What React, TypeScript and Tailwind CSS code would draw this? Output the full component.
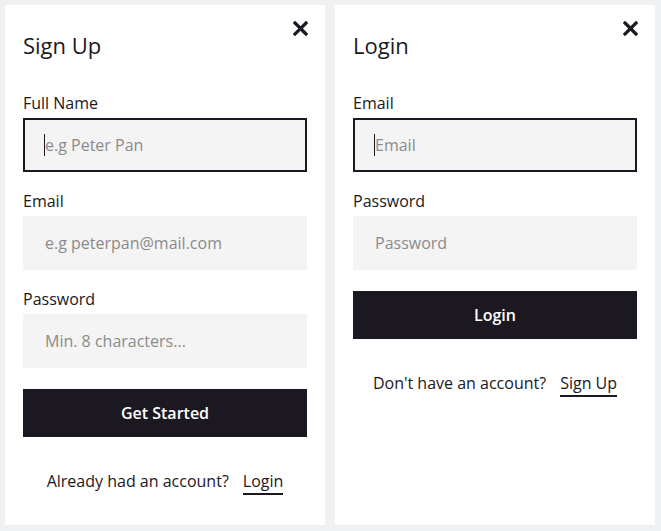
import React from "react";

const ink = "text-[#1b1821]";

function CloseIcon() {
  return (
    <svg width="15" height="15" viewBox="0 0 15 15" className="absolute top-[16px] right-[17px]">
      <path d="M2 2 L13 13 M13 2 L2 13" stroke="#1b1821" strokeWidth="3.2" strokeLinecap="square" />
    </svg>
  );
}

function Field({ label, placeholder, type = "text", focused = false }: { label: string; placeholder: string; type?: string; focused?: boolean }) {
  return (
    <div className="flex flex-col gap-[3px]">
      <label className={`text-base leading-6 ${ink}`}>{label}</label>
      <div className="relative">
        <input
          type={type}
          placeholder={placeholder}
          className={`w-full h-[54px] bg-[#f4f4f4] border-2 px-[20px] text-base outline-none placeholder:text-[#8b8b8b] ${
            focused ? "border-[#1b1821]" : "border-transparent"
          }`}
        />
        {focused && <span className="absolute left-[21px] top-[16px] w-px h-[22px] bg-[#1b1821]" />}
      </div>
    </div>
  );
}

function Card({ title, children, footerText, footerLink, button }: { title: string; children: React.ReactNode; footerText: string; footerLink: string; button: string }) {
  return (
    <div className="relative w-[320px] h-[520px] bg-white px-[18px] pt-[25px]">
      <CloseIcon />
      <h2 className={`text-[22px] leading-[30px] ${ink}`}>{title}</h2>
      <div className="mt-[31px] flex flex-col gap-[17px]">{children}</div>
      <button className="mt-[21px] w-full h-[48px] bg-[#1b1821] text-white text-base font-semibold">{button}</button>
      <div className={`mt-[32px] flex justify-center items-start gap-[14px] text-base leading-6 ${ink}`}>
        <span>{footerText}</span>
        <a className="border-b-2 border-[#1b1821] cursor-pointer">{footerLink}</a>
      </div>
    </div>
  );
}

export default function App() {
  return (
    <div className="min-h-[531px] w-[661px] bg-[#f0f1f3] p-[5px] flex gap-[10px] font-['Open_Sans',sans-serif]">
      <Card title="Sign Up" button="Get Started" footerText="Already had an account?" footerLink="Login">
        <Field label="Full Name" placeholder="e.g Peter Pan" focused />
        <Field label="Email" placeholder="e.g peterpan@mail.com" type="email" />
        <Field label="Password" placeholder="Min. 8 characters..." type="password" />
      </Card>
      <Card title="Login" button="Login" footerText="Don't have an account?" footerLink="Sign Up">
        <Field label="Email" placeholder="Email" type="email" focused />
        <Field label="Password" placeholder="Password" type="password" />
      </Card>
    </div>
  );
}
